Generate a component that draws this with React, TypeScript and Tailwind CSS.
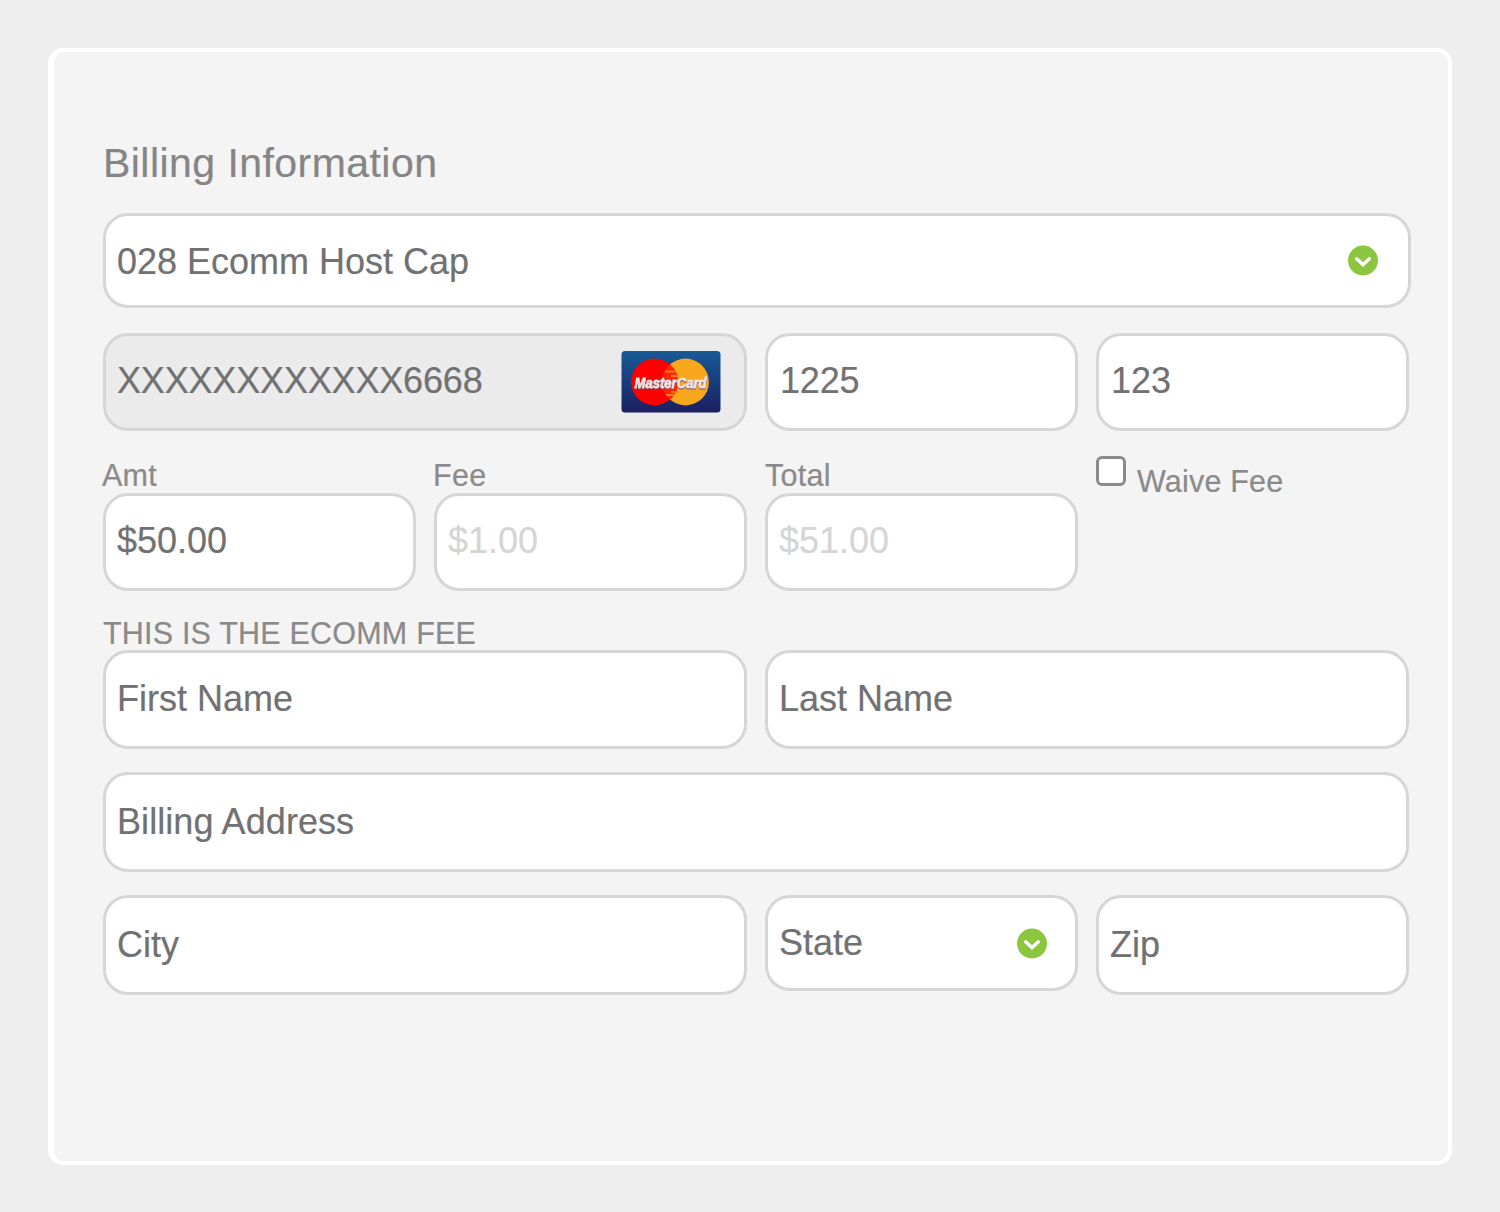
import type { ReactNode } from "react";

type FieldProps = {
  children: ReactNode;
  className?: string;
  textClass?: string;
};

function Field({ children, className = "h-[98px]", textClass = "text-[#717171]" }: FieldProps) {
  return (
    <div
      className={`flex items-center rounded-[25px] border-[3px] border-[#d6d6d6] bg-white pl-[11px] text-[36px] leading-[42px] whitespace-nowrap [-webkit-text-stroke:0.2px] ${className}`}
    >
      <span className={textClass}>{children}</span>
    </div>
  );
}

function Select({ children, className }: { children: ReactNode; className: string }) {
  return (
    <div
      className={`flex items-center justify-between rounded-[25px] border-[3px] border-[#d6d6d6] bg-white pl-[11px] text-[36px] leading-[42px] whitespace-nowrap text-[#717171] [-webkit-text-stroke:0.2px] ${className}`}
    >
      <span>{children}</span>
      <svg className="size-[31px]" viewBox="0 0 31 31" fill="none">
        <circle cx="16" cy="15.5" r="15" fill="#8cc63f" />
        <path
          d="M9.6 13.8 16 19.6 22.4 13.8"
          stroke="#fff"
          strokeWidth="3.4"
          strokeLinecap="round"
          strokeLinejoin="miter"
        />
      </svg>
    </div>
  );
}

function MasterCard() {
  return (
    <svg className="h-[62px] w-[100px] overflow-visible" viewBox="0 0 100 62">
      <defs>
        <linearGradient id="card" x1="0" y1="0" x2="0" y2="1">
          <stop offset="0" stopColor="#175a96" />
          <stop offset="0.5" stopColor="#183d7c" />
          <stop offset="1" stopColor="#1b1f62" />
        </linearGradient>
      </defs>
      <rect x="0.5" width="99" height="61.5" rx="3.5" fill="url(#card)" />
      <circle cx="64.5" cy="31" r="23.4" fill="#f9a71b" />
      <circle cx="33.5" cy="31" r="23.4" fill="#ff0000" />
      <path d="M49 13.2a23.6 23.6 0 0 1 0 35.6a23.6 23.6 0 0 1 0-35.6Z" fill="#ff2408" />
      <path d="M44 20.5h10M50 25h7M50 41h7M45 44h8" stroke="#fb7a12" strokeWidth="2" />
      <text
        x="49.5"
        y="36.5"
        textAnchor="middle"
        textLength="72"
        lengthAdjust="spacingAndGlyphs"
        fontFamily="Liberation Sans, Arial, sans-serif"
        fontSize="14.5"
        fontWeight="700"
        fontStyle="italic"
        fill="#f1e4e6"
        stroke="#f1e4e6"
        strokeWidth="0.8"
        style={{ filter: "drop-shadow(0.5px 1px 0.5px #7d4350)" }}
      >
        MasterCard
      </text>
    </svg>
  );
}

function Label({ children, className = "" }: { children: ReactNode; className?: string }) {
  return (
    <div
      className={`h-9 text-[30.5px] leading-9 whitespace-nowrap text-[#8a8a8a] [-webkit-text-stroke:0.2px] ${className}`}
    >
      {children}
    </div>
  );
}

export default function App() {
  return (
    <div className="h-[1212px] w-[1500px] bg-[#eeeeee] p-12 pb-[47px] font-['Liberation_Sans',Arial,sans-serif]">
      <main className="h-full rounded-[15px] border-4 border-l-[6px] border-white bg-[#f4f4f4] pl-[49px]">
        <h1 className="mt-[86px] h-[75px] text-[41px] leading-[50px] tracking-[0.45px] text-[#858585] [-webkit-text-stroke:0.2px]">
          Billing Information
        </h1>

        <Select className="h-[95px] w-[1308px] pr-[30px]">
          <span className="block pt-[2px]">028 Ecomm Host Cap</span>
        </Select>

        <div className="mt-[25px] grid w-[1306px] grid-cols-4 gap-x-[18px]">
          <div className="col-span-2 flex h-[98px] items-center justify-between rounded-[25px] border-[3px] border-[#d6d6d6] bg-[#ebebeb] pr-[23px] pl-[11px] text-[36px] leading-[42px] text-[#717171] [-webkit-text-stroke:0.2px]">
            <span className="-mt-[2px] tracking-[-0.17px]">XXXXXXXXXXXX6668</span>
            <MasterCard />
          </div>
          <Field textClass="-mt-[2px] pl-[1px] tracking-[-0.2px] text-[#717171]">1225</Field>
          <Field textClass="-mt-[2px] pl-[1px] text-[#717171]">123</Field>
        </div>

        <div className="mt-[26px] grid w-[1306px] grid-cols-4 gap-x-[18px]">
          <div>
            <Label className="-ml-[1px] tracking-[0.2px]">Amt</Label>
            <Field textClass="-mt-[2px] text-[#717171]">$50.00</Field>
          </div>
          <div>
            <Label className="-ml-[1px] tracking-[0.3px]">Fee</Label>
            <Field textClass="-mt-[2px] text-[#d5d5d5]">$1.00</Field>
          </div>
          <div>
            <Label className="tracking-[0.3px]">Total</Label>
            <Field textClass="-mt-[2px] text-[#d5d5d5]">$51.00</Field>
          </div>
          <div className="flex items-start gap-[11px]">
            <span className="-mt-[1px] size-[30px] rounded-[6px] border-[3px] border-[#8a8a8a] bg-white" />
            <div className="mt-[6px]">
              <Label className="tracking-[0.2px]">Waive Fee</Label>
            </div>
          </div>
        </div>

        <div className="mt-[24px]">
          <Label className="tracking-[0.2px]">THIS IS THE ECOMM FEE</Label>
        </div>

        <div className="-mt-[1px] grid w-[1306px] grid-cols-4 gap-x-[18px]">
          <Field className="col-span-2 h-[99px]" textClass="-mt-[1px] text-[#717171]">First Name</Field>
          <Field className="col-span-2 h-[99px]" textClass="-mt-[1px] text-[#717171]">Last Name</Field>
        </div>

        <div className="mt-[23px] w-[1306px]">
          <Field className="h-[100px]" textClass="tracking-[0.07px] text-[#717171]">Billing Address</Field>
        </div>

        <div className="mt-[23px] grid w-[1306px] grid-cols-4 items-start gap-x-[18px]">
          <Field className="col-span-2 h-[100px]" textClass="text-[#717171]">City</Field>
          <Select className="h-[96px] pr-[28px]">State</Select>
          <Field className="h-[100px]" textClass="text-[#717171]">Zip</Field>
        </div>
      </main>
    </div>
  );
}
